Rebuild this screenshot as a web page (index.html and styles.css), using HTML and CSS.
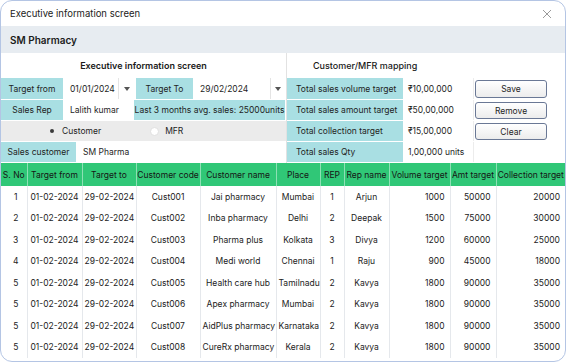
FILE: index.html
```html
<!DOCTYPE html>
<html>
<head>
<meta charset="utf-8">
<link rel="stylesheet" href="styles.css">
</head>
<body>
<div class="card">
  <div class="titlebar">
    <span>Executive information screen</span>
    <svg class="close" width="10" height="10" viewBox="0 0 10 10"><path d="M1 1L9 9M9 1L1 9" stroke="#9a9a9a" stroke-width="1"/></svg>
  </div>
  <div class="company">SM Pharmacy</div>
  <div class="forms">
    <div class="left">
      <div class="sec-title">Executive information screen</div>
      <div class="row h22">
        <div class="lbl c63">Target from</div>
        <div class="val c54">01/01/2024</div>
        <div class="drop c18"><i></i></div>
        <div class="lbl c58">Target To</div>
        <div class="val grow">29/02/2024</div>
        <div class="drop c16"><i></i></div>
      </div>
      <div class="row">
        <div class="lbl c63">Sales Rep</div>
        <div class="val c70">Lalith kumar</div>
        <div class="lbl grow">Last 3 months avg. sales: 25000units</div>
      </div>
      <div class="row radios">
        <label class="radio"><span class="dot checked"></span>Customer</label>
        <label class="radio"><span class="dot"></span>MFR</label>
      </div>
      <div class="row">
        <div class="lbl c76">Sales customer</div>
        <div class="val grow">SM Pharma</div>
      </div>
    </div>
    <div class="right">
      <div class="sec-title rtitle">Customer/MFR mapping</div>
      <div class="row h22">
        <div class="rlbl">Total sales volume target</div>
        <div class="rval">₹10,00,000</div>
        <div class="rbtn"><button class="btn">Save</button></div>
      </div>
      <div class="row">
        <div class="rlbl">Total sales amount target</div>
        <div class="rval">₹50,00,000</div>
        <div class="rbtn"><button class="btn">Remove</button></div>
      </div>
      <div class="row">
        <div class="rlbl">Total collection target</div>
        <div class="rval">₹15,00,000</div>
        <div class="rbtn"><button class="btn">Clear</button></div>
      </div>
      <div class="row">
        <div class="rlbl">Total sales Qty</div>
        <div class="rval">1,00,000 units</div>
        <div class="rbtn"></div>
      </div>
    </div>
  </div>
  <table class="grid">
    <colgroup>
      <col style="width:26px"><col style="width:55px"><col style="width:54px"><col style="width:64px"><col style="width:76px"><col style="width:44px"><col style="width:24px"><col style="width:45px"><col style="width:61px"><col style="width:46px"><col>
    </colgroup>
    <thead>
      <tr><th>S. No</th><th>Target from</th><th>Target to</th><th>Customer code</th><th>Customer name</th><th>Place</th><th>REP</th><th>Rep name</th><th>Volume target</th><th>Amt target</th><th>Collection target</th></tr>
    </thead>
    <tbody>
      <tr><td>1</td><td>01-02-2024</td><td>29-02-2024</td><td>Cust001</td><td>Jai pharmacy</td><td>Mumbai</td><td>1</td><td>Arjun</td><td class="num">1000</td><td class="num">50000</td><td class="num">20000</td></tr>
      <tr><td>2</td><td>01-02-2024</td><td>29-02-2024</td><td>Cust002</td><td>Inba pharmacy</td><td>Delhi</td><td>2</td><td>Deepak</td><td class="num">1500</td><td class="num">75000</td><td class="num">30000</td></tr>
      <tr><td>3</td><td>01-02-2024</td><td>29-02-2024</td><td>Cust003</td><td>Pharma plus</td><td>Kolkata</td><td>3</td><td>Divya</td><td class="num">1200</td><td class="num">60000</td><td class="num">25000</td></tr>
      <tr><td>4</td><td>01-02-2024</td><td>29-02-2024</td><td>Cust004</td><td>Medi world</td><td>Chennai</td><td>1</td><td>Raju</td><td class="num">900</td><td class="num">45000</td><td class="num">18000</td></tr>
      <tr><td>5</td><td>01-02-2024</td><td>29-02-2024</td><td>Cust005</td><td>Health care hub</td><td>Tamilnadu</td><td>2</td><td>Kavya</td><td class="num">1800</td><td class="num">90000</td><td class="num">35000</td></tr>
      <tr><td>5</td><td>01-02-2024</td><td>29-02-2024</td><td>Cust006</td><td>Apex pharmacy</td><td>Mumbai</td><td>2</td><td>Kavya</td><td class="num">1800</td><td class="num">90000</td><td class="num">35000</td></tr>
      <tr><td>5</td><td>01-02-2024</td><td>29-02-2024</td><td>Cust007</td><td>AidPlus pharmacy</td><td>Karnataka</td><td>2</td><td>Kavya</td><td class="num">1800</td><td class="num">90000</td><td class="num">35000</td></tr>
      <tr><td>5</td><td>01-02-2024</td><td>29-02-2024</td><td>Cust008</td><td>CureRx pharmacy</td><td>Kerala</td><td>2</td><td>Kavya</td><td class="num">1800</td><td class="num">90000</td><td class="num">35000</td></tr>
    </tbody>
  </table>
</div>
</body>
</html>
```

FILE: styles.css
```css
* { box-sizing: border-box; }
html, body { margin: 0; padding: 0; background: #ffffff; }
body { font-family: Inter, "Noto Sans", sans-serif; font-size: 8.5px; color: #1f1f1f; }

.card {
  width: 566px;
  height: 362px;
  border: 1px solid #b4c5e4;
  border-radius: 12px;
  overflow: hidden;
  background: #fff;
}

.titlebar {
  height: 25px;
  display: flex;
  align-items: center;
  justify-content: space-between;
  padding: 0 13px 0 9px;
  font-size: 9.5px;
  color: #222;
}
.close { display: block; }

.company {
  height: 27px;
  background: #e7ecf1;
  display: flex;
  align-items: center;
  padding-left: 9px;
  font-size: 10px;
  font-weight: 600;
  color: #1c1c1c;
}

.forms { display: flex; }
.left { width: 286px; border-right: 1px solid #e2e2e2; }
.right { flex: 1; }

.sec-title {
  height: 25px;
  display: flex;
  align-items: center;
  justify-content: center;
  font-size: 9px;
  font-weight: 600;
  color: #1a1a1a;
  border-bottom: 1px solid #fff;
}
.rtitle { justify-content: flex-start; padding-left: 26px; font-weight: 500; }

.row {
  height: 21px;
  display: flex;
  border-bottom: 1px solid #fff;
}
.row.h22 { height: 22px; }
.row > div { display: flex; align-items: center; }

.lbl {
  background: #a9dfe3;
  justify-content: center;
  border-right: 1px solid #fff;
  color: #1e1e1e;
  white-space: nowrap;
}
.val {
  background: #fff;
  padding-left: 6px;
  color: #1e1e1e;
  white-space: nowrap;
}
.grow { flex: 1; }
.c63 { width: 63px; }
.c54 { width: 54px; }
.c18 { width: 18px; }
.c58 { width: 58px; }
.c16 { width: 16px; }
.c70 { width: 70px; }
.c76 { width: 76px; }

.drop {
  justify-content: center;
  border-left: 1px solid #e4e4e4;
  border-right: 1px solid #fff;
  background: #fff;
}
.drop i {
  display: block;
  width: 0; height: 0;
  border-left: 3.5px solid transparent;
  border-right: 3.5px solid transparent;
  border-top: 4px solid #555;
}

.radios {
  background: #ebebeb;
  align-items: center;
  padding-left: 46px;
  gap: 49px;
}
.radio { display: flex; align-items: center; gap: 6px; color: #1e1e1e; }
.dot {
  width: 9px; height: 9px;
  border-radius: 50%;
  background: #fff;
  border: 1px solid #e0e0e0;
  display: flex;
  align-items: center;
  justify-content: center;
}
.dot.checked { background: transparent; border-color: transparent; }
.dot.checked::after {
  content: "";
  width: 4px; height: 4px;
  border-radius: 50%;
  background: #3a3a3a;
}

.rlbl {
  width: 117px;
  background: #a9dfe3;
  padding-left: 9px;
  border-right: 1px solid #fff;
  color: #1e1e1e;
  white-space: nowrap;
}
.rval {
  width: 70px;
  padding-left: 4px;
  color: #1e1e1e;
  white-space: nowrap;
  border-right: 1px solid #ececec;
}
.rbtn { width: 74px; padding: 2px 1px 1px; align-items: stretch !important; }
.btn {
  flex: 1;
  font-family: Inter, "Noto Sans", sans-serif;
  font-size: 8.5px;
  color: #1e1e1e;
  border: 1px solid #6a7895;
  border-radius: 3px;
  background: linear-gradient(#ffffff, #ececec);
  padding: 0;
  margin: 0;
}

.grid {
  width: 564px;
  border-collapse: collapse;
  table-layout: fixed;
}
.grid th {
  height: 23px;
  background: #30c777;
  color: #151515;
  font-weight: 400;
  font-size: 8.5px;
  border-right: 1px solid rgba(255,255,255,0.45);
  white-space: nowrap;
  padding: 0;
  text-align: center;
}
.grid th:last-child { border-right: none; }
.grid td {
  height: 21.5px;
  text-align: center;
  border-right: 1px solid #e5e8ec;
  color: #222;
  white-space: nowrap;
  padding: 0 2px;
}
.grid td:first-child { padding-left: 6px; }
.grid td:last-child { border-right: none; }
.grid td.num { text-align: right; padding-right: 5px; }
```
